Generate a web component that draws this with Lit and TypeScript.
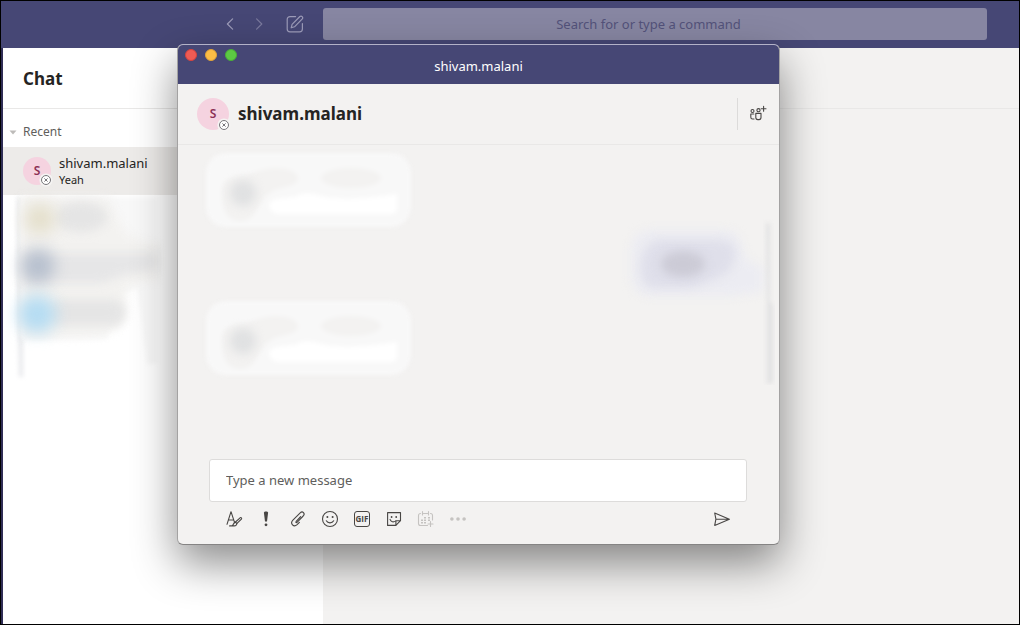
import { LitElement, html, css, svg } from "lit";
import { customElement, state } from "lit/decorators.js";

const icon = (label: string, body: unknown, cls = "") => html`
  <button type="button" class="tool ${cls}" aria-label=${label}>
    <svg viewBox="0 0 16 16" width="16" height="16" aria-hidden="true">${body}</svg>
  </button>
`;

const formatIcon = svg`
  <path d="M1 13.3 5 .7l3.7 11.2M2.3 9h5.3M3.6 14.9h4.6c1.8 0 2.7-1 2.6-2.6L8.9 10.9c-1.3.7-1.2 2.7-2.6 3.8" />
  <path d="m9.5 11 4.6-4.2c1.1-.7 2 .3 1.3 1.3L11 12.4" />`;
const importantIcon = svg`
  <path class="solid" d="M5.9 1.7C5.9.2 10.1.2 10.1 1.7L9 10.6H7z" />
  <circle class="solid" cx="8" cy="13.8" r="1.4" />`;
const attachIcon = svg`
  <path d="M10.6 5.6 6.2 10.3c-.9.9-.1 1.8.8 1l6.2-6.3c2.4-2.6-.6-5.4-3-3.2L2.9 9.2c-3.2 3.4.8 7.6 4.2 4.4l2.3-2.3" />`;
const emojiIcon = svg`
  <circle cx="8" cy="8" r="7.5" />
  <path d="M4.3 9.8c1.6 2.8 5.8 2.8 7.4 0" />
  <circle class="solid" cx="5.4" cy="6" r="1" /><circle class="solid" cx="10.6" cy="6" r="1" />`;
const stickerIcon = svg`
  <path d="M1.6 1.6h12.9v8.1l-4.6 4.7H1.6zM14.5 9.7H9.9v4.7" />
  <path d="M4 8.4c1 2.6 3.4 3 5.5 1.7" />
  <circle class="solid" cx="5.6" cy="6" r=".9" /><circle class="solid" cx="10.2" cy="6" r=".9" />`;
const meetingIcon = svg`
  <path d="M9.5 14.5H2.5a2 2 0 0 1-2-2v-8a2 2 0 0 1 2-2M5.5 2.5h4M12.5 2.5a2 2 0 0 1 2 2v4.5M4.5.5v3.5M10.5.5v3.5M12.5 10.5v5M10 13h5" />
  <path class="solid" d="M6 6h2v1.500H6zM10 6h2v1.500h-2zM3 8.500h2V10H3zM6 8.500h2V10H6zM10 8.500h2V10h-2zM3 11h2v1.500H3zM6 11h2v1.500H6z" />`;
const moreIcon = svg`
  <circle class="solid" cx="1.900" cy="8" r="1.800" /><circle class="solid" cx="8" cy="8" r="1.800" /><circle class="solid" cx="14.100" cy="8" r="1.800" />`;
const sendIcon = svg`<path d="M.7 2 15.4 8.2.7 14.4 1.9 8.2zM1.9 8.2h13" />`;
const peopleIcon = svg`
  <circle cx="2.5" cy="5" r="1.500" /><circle cx="8.500" cy="4.200" r="1.600" />
  <path d="M3.800 8H.8v3.200c0 1.100.7 1.800 1.800 1.800h1.400M5.800 7.400h5.200v4.200a2 2 0 0 1-2 2H7.800a2 2 0 0 1-2-2zM13.600.4v4.800M11.200 2.800H16" />`;

@customElement("user-avatar")
export class UserAvatar extends LitElement {
  static styles = css`
    :host { display: block; flex: none; width: var(--size, 28px); height: var(--size, 28px); position: relative; }
    .face {
      display: grid; place-items: center; height: 100%; border-radius: 50%;
      background: #f5d3e0; color: #8b2f55;
      font: 600 12px/16px "Noto Sans", "Open Sans", sans-serif;
    }
    .status { position: absolute; right: -2px; bottom: -2px; width: 14px; height: 14px; }
  `;
  render() {
    return html`
      <div class="face">S</div>
      <svg class="status" viewBox="0 0 14 14" aria-label="Offline">
        <circle cx="7" cy="7" r="6.6" fill="#f5f4f3" />
        <circle cx="7" cy="7" r="4.5" fill="#fff" stroke="#77767a" />
        <path d="m5.4 5.4 3.2 3.2m0-3.2L5.4 8.6" stroke="#77767a" fill="none" />
      </svg>
    `;
  }
}

@customElement("app-root")
export class AppRoot extends LitElement {
  @state() private draft = "";

  static styles = css`
    :host {
      display: block;
      font-family: "Noto Sans", "Open Sans", sans-serif;
      font-size: 13px; line-height: 18px; color: #252423;
    }
    * { box-sizing: border-box; }
    button { border: 0; background: none; padding: 0; color: inherit; font: inherit; }
    svg { display: block; }
    h1, h2, p { margin: 0; }

    .app {
      position: relative; display: flex; flex-direction: column; min-height: 100vh;
      border: 1px solid #000; overflow: hidden; background: #f3f2f1;
    }
    .topbar {
      display: flex; align-items: center; height: 47px; padding: 0 32px 2px 216px;
      background: #464775; color: #9c9bb8;
    }
    .nav { width: 28px; height: 28px; display: grid; place-items: center; }
    .nav.compose { margin: 0 14px 0 8px; }
    .line { fill: none; stroke: currentColor; stroke-width: 1.2; stroke-linecap: round; stroke-linejoin: round; }
    .search {
      flex: 1; min-width: 0; height: 32px; border: 0; border-radius: 3px; padding: 0;
      background: #8786a2; color: #464775; font: inherit; text-align: center; outline: none;
    }
    .search::placeholder { color: #53527a; opacity: 1; }

    .body { flex: 1; display: flex; }
    .sidebar { width: 322px; flex: none; border-left: 2px solid #2f2d55; background: #fff; }
    .side-head, .main-head { height: 61px; border-bottom: 1px solid #e9e8e7; }
    .side-head { display: flex; align-items: center; padding: 2px 20px 0; }
    .side-head h1 { font-size: 17px; line-height: 24px; font-weight: 700; }
    .main { flex: 1; }
    .group {
      display: flex; align-items: center; gap: 6px; width: 100%; height: 38px; padding: 8px 6px 0;
      font-size: 12px; color: #5f5e5c;
    }
    .item {
      display: flex; align-items: center; gap: 8px; width: 100%; height: 48px; padding: 0 20px;
      background: #edebe9; text-align: left;
    }
    .item-text { display: grid; }
    .item-text small { font-size: 11px; line-height: 16px; }
    .item-text span { line-height: 17px; }
    .blurred { overflow: visible; }
    .soft { filter: blur(5px); }
    .softer { filter: blur(8px); }
    .fine { filter: blur(2px); }

    .window {
      position: absolute; top: 43px; left: 176px; right: 239px;
      display: flex; flex-direction: column; border: 1px solid #a3a2a2;
      border-top-color: #b3b2c8; border-bottom-color: #858484; border-radius: 6px;
      background: #f3f2f1; box-shadow: 0 18px 44px rgba(0, 0, 0, 0.46);
    }
    .titlebar {
      display: grid; grid-template-columns: 1fr auto 1fr; height: 39px; padding: 4px 7px 2px;
      background: #464775; color: #fff; border-radius: 5px 5px 0 0;
    }
    .lights { display: flex; gap: 8px; }
    .light { width: 12px; height: 12px; border-radius: 50%; background: #ee5b54; border: 1px solid #d8433d; }
    .light.min { background: #fbbc45; border-color: #e0a338; }
    .light.max { background: #5cc943; border-color: #4aae36; }
    .titlebar p { align-self: center; }
    .chat-head {
      display: flex; align-items: center; gap: 9px; height: 61px; padding: 0 5px 0 19px;
      border-bottom: 1px solid #e9e8e7;
    }
    .chat-head user-avatar { --size: 32px; }
    .chat-head h2 { flex: 1; font-size: 17px; line-height: 24px; font-weight: 700; }
    .add { height: 32px; border-left: 1px solid #dcdbda; padding-left: 4px; }
    .messages { position: relative; display: flex; flex-direction: column; min-height: 314px; padding: 5px 10px 0 22px; }
    .msg { height: 74px; }
    .msg.mine { align-self: flex-end; }
    .scroll { position: absolute; right: 4px; top: 74px; }
    .composer { padding: 0 32px 9px; margin-left: -1px; }
    .field {
      display: block; width: 100%; height: 43px; padding: 0 16px 2px; border: 1px solid #dddcdb; border-radius: 3px;
      background: #fff; color: #252423; font: inherit; outline: none;
    }
    .field::placeholder { color: #605e5c; opacity: 1; }
    .tools { display: flex; padding: 1px 9px 0; }
    .tool { width: 32px; height: 32px; display: grid; place-items: center; color: #484644; }
    .tool svg { overflow: visible; fill: none; stroke: currentColor; stroke-width: 1.1; stroke-linejoin: round; stroke-linecap: round; }
    .tool .solid { fill: currentColor; stroke: none; }
    .tool.off { color: #c5c3c1; }
    .tool.send { margin-left: auto; }
    .gif { width: 16px; height: 16px; border: 1px solid #484644; border-radius: 3px; font: 700 8px/14px "Open Sans", "Noto Sans", sans-serif; display: grid; place-items: center; }
  `;

  private received() {
    return html`
      <div class="msg">
        <svg class="blurred" width="216" height="80" viewBox="0 0 216 80" aria-hidden="true">
          <g class="fine">
            <rect x="6" y="3" width="205" height="74" rx="20" fill="#f8f8f8" />
            <path d="M22 42C22 25 36 28 50 24 70 15 96 17 98 28 98 38 78 36 70 43 58 49 58 69 43 71 24 73 22 55 22 42z" fill="#f3f2f1" />
            <ellipse cx="151" cy="28" rx="30" ry="10" fill="#f3f2f1" />
            <path d="M69 56c0-8 14-8 26-9 14-8 20-1 38 1 22 2 42-1 64-4v14q0 6-8 6H80q-10 0-11-8z" fill="#fff" />
          </g>
          <circle class="soft" cx="43" cy="43" r="13" fill="#e0e1e2" />
        </svg>
      </div>
    `;
  }

  render() {
    return html`
      <div class="app">
        <header class="topbar">
          <button class="nav" type="button" aria-label="Back">
            <svg width="12" height="12" viewBox="0 0 12 12"><path class="line" d="M7.6.8 2.4 6l5.2 5.2" /></svg>
          </button>
          <button class="nav" type="button" aria-label="Forward">
            <svg width="12" height="12" viewBox="0 0 12 12"><path class="line" opacity=".6" d="M3.6.8 8.8 6l-5.2 5.2" /></svg>
          </button>
          <button class="nav compose" type="button" aria-label="New chat">
            <svg width="18" height="18" viewBox="0 0 18 18"><path class="line" d="M9.6 1.6H4A2.8 2.8 0 0 0 1.2 4.4V14A2.8 2.8 0 0 0 4 16.8h9.6a2.8 2.8 0 0 0 2.8-2.8V8.6M5.2 12.8l.9-3.5 7.8-7.8c1.6-1.2 3.6.8 2.4 2.4l-7.8 7.9z" /></svg>
          </button>
          <input class="search" type="search" aria-label="Search" placeholder="Search for or type a command" />
        </header>
        <div class="body">
          <nav class="sidebar" aria-label="Chats">
            <div class="side-head"><h1>Chat</h1></div>
            <button class="group" type="button">
              <svg width="8" height="5" viewBox="0 0 8 5"><path d="M.5.5h7L4 4.5z" fill="#bdbbb9" /></svg>
              Recent
            </button>
            <button class="item" type="button">
              <user-avatar></user-avatar>
              <span class="item-text"><span>shivam.malani</span><small>Yeah</small></span>
            </button>
            <svg class="blurred" width="174" height="190" viewBox="0 0 174 190" aria-hidden="true">
              <path class="fine" d="M14 2h4l2 80v100h-4L14 80z" fill="#e9eaed" />
              <path class="fine" d="M18 2h136v166l-10 2-10-78-24 12-6 40H18z" fill="#f8f8f8" />
              <path class="soft" d="M18 2h88c10 26 16 46 48 46v38c-40 0-28 10-32 34-6 20-16 22-104 22z" fill="#f3f2f0" />
              <g class="soft">
                <ellipse cx="78" cy="22" rx="26" ry="15" fill="#e5e5e5" />
                <path d="M20 58h134v16l-34 6-20 8H20z" fill="#e6e6e7" />
                <rect x="44" y="105" width="78" height="25" rx="12" fill="#e5e5e5" />
              </g>
              <circle class="softer" cx="37" cy="24" r="15" fill="#e4dfcb" />
              <circle class="softer" cx="35" cy="71" r="17" fill="#b7c0ce" />
              <circle class="softer" cx="34" cy="119" r="19" fill="#b5dcf2" />
            </svg>
          </nav>
          <main class="main"><div class="main-head"></div></main>
        </div>

        <section class="window" aria-label="Chat window">
          <div class="titlebar">
            <div class="lights">
              <button class="light" type="button" aria-label="Close"></button>
              <button class="light min" type="button" aria-label="Minimize"></button>
              <button class="light max" type="button" aria-label="Zoom"></button>
            </div>
            <p>shivam.malani</p>
          </div>
          <div class="chat-head">
            <user-avatar></user-avatar>
            <h2>shivam.malani</h2>
            <div class="add">${icon("Add people", peopleIcon)}</div>
          </div>
          <div class="messages">
            ${this.received()}
            <div class="msg mine">
              <svg class="blurred" width="140" height="80" viewBox="0 0 140 80" aria-hidden="true">
                <path class="soft" d="M20 6h76q16 2 18 22 4 12 20 14v26l-32 4H20Q4 70 2 54V24Q4 8 20 6z" fill="#ececf2" />
                <path class="soft" d="M28 16h62q18 2 16 16-2 20-30 26-8 6-20 6H28q-16 0-16-20t16-28z" fill="#dfdfea" />
                <ellipse class="soft" cx="54" cy="40" rx="22" ry="13" fill="#cccbd6" />
              </svg>
            </div>
            ${this.received()}
            <svg class="scroll" width="12" height="166" viewBox="0 0 12 166" aria-hidden="true">
              <path class="fine" d="M3 4h4v78l3 4v76q0 3-6 3V86z" fill="#e2e2e3" />
            </svg>
          </div>
          <form class="composer" @submit=${(e: Event) => e.preventDefault()}>
            <input
              class="field"
              type="text"
              aria-label="Type a new message"
              placeholder="Type a new message"
              .value=${this.draft}
              @input=${(e: Event) => (this.draft = (e.target as HTMLInputElement).value)}
            />
            <div class="tools">
              ${icon("Format", formatIcon)} ${icon("Set delivery options", importantIcon)}
              ${icon("Attach", attachIcon)} ${icon("Emoji", emojiIcon)}
              <button class="tool" type="button"><span class="gif">GIF</span></button>
              ${icon("Sticker", stickerIcon)} ${icon("Schedule a meeting", meetingIcon, "off")}
              ${icon("More options", moreIcon, "off")} ${icon("Send", sendIcon, "send")}
            </div>
          </form>
        </section>
      </div>
    `;
  }
}
